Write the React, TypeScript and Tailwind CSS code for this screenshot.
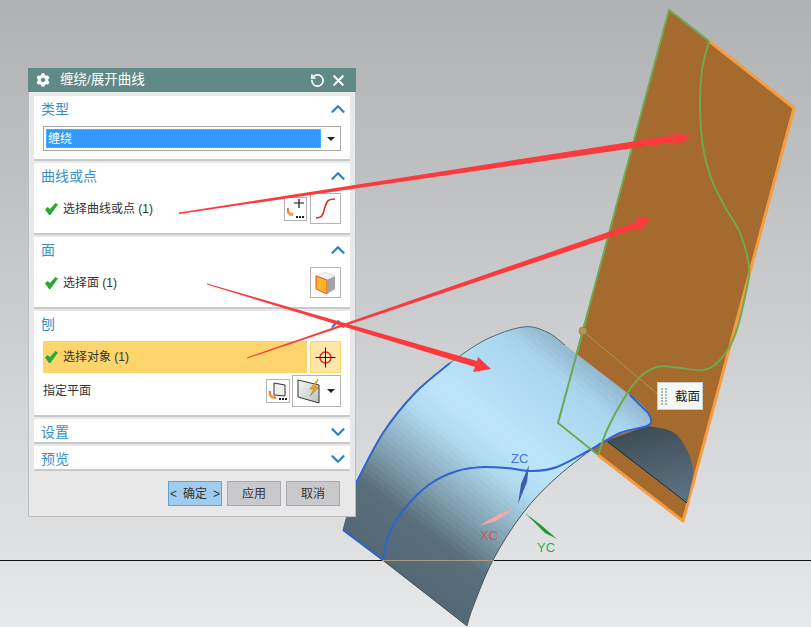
import type { ReactNode } from "react";
import { FaCog } from "react-icons/fa";
import { ChevronDown, ChevronUp, RotateCw, X } from "lucide-react";

type Pt = [number, number];

// catmull-rom through the points, good enough for the model's curves
function smooth(pts: Pt[], move = true) {
  let d = move ? `M${pts[0][0]},${pts[0][1]}` : "";
  for (let i = 0; i < pts.length - 1; i++) {
    const p0 = pts[Math.max(i - 1, 0)];
    const p1 = pts[i];
    const p2 = pts[i + 1];
    const p3 = pts[Math.min(i + 2, pts.length - 1)];
    const c1 = [p1[0] + (p2[0] - p0[0]) / 6, p1[1] + (p2[1] - p0[1]) / 6];
    const c2 = [p2[0] - (p3[0] - p1[0]) / 6, p2[1] - (p3[1] - p1[1]) / 6];
    d += ` C${c1[0]},${c1[1]} ${c2[0]},${c2[1]} ${p2[0]},${p2[1]}`;
  }
  return d;
}

const topArc: Pt[] = [[356, 483], [383, 433], [415, 393], [450, 363], [485, 340], [523, 327], [547, 332], [565, 345]];
const lowerArc: Pt[] = [[600, 443], [557, 477], [523, 513], [493, 560], [473, 607], [467, 626]];
const wrapCurve: Pt[] = [
  [383, 560], [389, 534], [405, 508], [430, 484], [457, 471], [483, 467], [507, 468],
  [533, 471], [557, 467], [590, 450], [620, 433], [647, 426], [651, 420], [648, 413],
  [640, 405], [630, 395],
];
const plateCurve: Pt[] = [
  [709, 41], [702, 70], [700, 105], [703, 147], [711, 178], [725, 207], [740, 233],
  [749, 267], [746, 292], [735, 335], [720, 360], [703, 370], [673, 367], [657, 367], [640, 377],
  [623, 400], [607, 430], [598, 455],
];

const surfacePath =
  `M343,530 L356,483` +
  smooth(topArc, false) +
  ` L630,395 Q648,408 651,418 Q651,424 647,426 Q620,432 600,443` +
  smooth(lowerArc, false) +
  ` Z`;

// the shading on the cylinder comes in visible facets, so hard stops
const ramp: [number, number[]][] = [
  [0, [82, 103, 115]],
  [0.22, [88, 110, 123]],
  [0.36, [136, 168, 184]],
  [0.5, [176, 218, 240]],
  [0.6, [189, 228, 250]],
  [0.85, [168, 213, 238]],
  [0.95, [143, 180, 201]],
  [1, [127, 160, 181]],
];
function rampAt(t: number) {
  let i = 0;
  while (i < ramp.length - 2 && t > ramp[i + 1][0]) i++;
  const [a, ca] = ramp[i];
  const [b, cb] = ramp[i + 1];
  const k = (t - a) / (b - a);
  return `rgb(${ca.map((v, j) => Math.round(v + (cb[j] - v) * k)).join(",")})`;
}
const BANDS = 60;
const bandStops = Array.from({ length: BANDS }, (_, i) => ({
  from: i / BANDS,
  to: (i + 1) / BANDS,
  color: rampAt((i + 0.5) / BANDS),
}));

function Scene() {
  return (
    <svg className="absolute inset-0" width={811} height={627} viewBox="0 0 811 627">
      <defs>
        <linearGradient id="shell" gradientUnits="userSpaceOnUse" x1={372} y1={580} x2={570} y2={324}>
          {bandStops.map((s) => [
            <stop key={`${s.from}a`} offset={s.from} stopColor={s.color} />,
            <stop key={`${s.from}b`} offset={s.to} stopColor={s.color} />,
          ])}
        </linearGradient>
        <linearGradient id="inner" x1="0.2" y1="0" x2="0.5" y2="1">
          <stop offset="0" stopColor="#3b4a52" />
          <stop offset="1" stopColor="#5b7180" />
        </linearGradient>
      </defs>

      <line x1={0} y1={560.5} x2={811} y2={560.5} stroke="#111" strokeWidth={1} />

      {/* sheet */}
      <polygon points="669,10 794,108 683,521 558,423" fill="#a46a2e" />
      <polyline points="709,41 794,108 683,521 598,455" fill="none" stroke="#f59c42" strokeWidth={3} strokeLinejoin="round" />
      <polyline points="709,41 669,10 558,423" fill="none" stroke="#6fa950" strokeWidth={2} />

      {/* cylinder */}
      <path d={`M606,441 L647,426 ${smooth([[647, 426], [673, 432], [687, 450], [693, 470], [690, 490], [687, 503]], false)} Z`} fill="url(#inner)" />
      <line x1={608} y1={442} x2={687} y2={503} stroke="#2a2a2a" strokeWidth={1} />
      <path d={surfacePath} fill="url(#shell)" />
      <path d={smooth(lowerArc)} fill="none" stroke="#4a5458" strokeWidth={1} />
      <path d={smooth(topArc.slice(3))} fill="none" stroke="#55656e" strokeWidth={1} />
      <path d={smooth(topArc.slice(0, 4))} fill="none" stroke="#2f64d0" strokeWidth={2} />
      <line x1={356} y1={483} x2={343} y2={530} stroke="#55656e" strokeWidth={1} />
      <line x1={343} y1={530} x2={383} y2={560} stroke="#2f64d0" strokeWidth={2} />
      <line x1={383} y1={560} x2={467} y2={626} stroke="#46565f" strokeWidth={1} />
      <path d={smooth(wrapCurve)} fill="none" stroke="#2f64d0" strokeWidth={2} />
      <line x1={382} y1={560.5} x2={494} y2={560.5} stroke="#b09a80" strokeWidth={1} />

      {/* green sketch on top of the shell */}
      <path d={smooth(plateCurve)} fill="none" stroke="#6fa950" strokeWidth={2} />
      <polyline points="586,320 558,423 598,455" fill="none" stroke="#6fa950" strokeWidth={2} />

      {/* label leader + handle */}
      <line x1={583} y1={331} x2={660} y2={396} stroke="#a59a50" strokeWidth={1} />
      <circle cx={583} cy={331} r={4} fill="#b5944e" stroke="#7a6a3a" strokeWidth={0.5} />

      {/* wcs */}
      <polygon points="529,465 527,482 518,504 521,484" fill="#3f5ca8" />
      <polygon points="514,509 499,514 479,526 496,521" fill="#f5a9a9" />
      <polygon points="525,513 541,525 557,539 545,533" fill="#1f9a2e" />
      <text x={511} y={463} fontSize={13} fill="#3a78e0" fontFamily="Liberation Sans, sans-serif">ZC</text>
      <text x={480} y={540} fontSize={13} fill="#d9534f" fontFamily="Liberation Sans, sans-serif">XC</text>
      <text x={537} y={552} fontSize={13} fill="#35a84a" fontFamily="Liberation Sans, sans-serif">YC</text>
    </svg>
  );
}

function Arrows() {
  return (
    <svg className="pointer-events-none absolute inset-0" width={811} height={627} viewBox="0 0 811 627">
      <g fill="#fc3a3c">
        <polygon points="179,212.5 675,135 673,132 691,137 675,146 676,142 179,214" />
        <polygon points="247,357.5 637,222 635,217 651,219 639,232 638,228 247,358.5" />
        <polygon points="207,283.5 477,361 478,357 491,369 473,372 475,367 207,284.5" />
      </g>
    </svg>
  );
}

function Check() {
  return (
    <svg width={13} height={12} viewBox="0 0 13 12" className="shrink-0">
      <path d="M0,6.5 L2.6,4 L5,6 L10.4,0 L13,1.6 L5.4,12 L4,12 Z" fill="#2aa838" />
    </svg>
  );
}

function Section({ title, open = true, children, className = "" }: { title: string; open?: boolean; children?: ReactNode; className?: string }) {
  return (
    <section className={`border-b-2 border-[#c9c9c9] bg-white ${className}`}>
      <div className="flex h-[25px] items-center justify-between pl-[7px] pr-px text-[14px] text-[#3a8fc7]">
        <span className="pt-px">{title}</span>
        {open ? (
          <ChevronUp size={22} strokeWidth={2.6} className="text-[#2e86c1]" />
        ) : (
          <ChevronDown size={22} strokeWidth={2.6} className="text-[#2e86c1]" />
        )}
      </div>
      {children}
    </section>
  );
}

function IconBox({ className = "", children }: { className?: string; children: ReactNode }) {
  return (
    <div className={`flex items-center justify-center border border-[#b4b4b4] bg-white ${className}`}>{children}</div>
  );
}

function AddIcon() {
  return (
    <svg width={21} height={22} viewBox="0 0 21 22">
      <path d="M9,5 H19 M14,1 V10" stroke="#111" strokeWidth={1.2} fill="none" />
      <path d="M3,10 Q2,16 8,17" stroke="#e8781e" strokeWidth={2} fill="none" />
      <path d="M1,14 L5,18 L9,15" fill="#f2a341" />
      <path d="M11,18 h2 v2 h-2 z M14,18 h2 v2 h-2 z M17,18 h2 v2 h-2 z" fill="#222" />
    </svg>
  );
}

function PlaneAddIcon() {
  return (
    <svg width={22} height={22} viewBox="0 0 22 22">
      <path d="M7,3 L18,5 V16 L7,15 Z" fill="#eef1ee" stroke="#333" strokeWidth={1} />
      <path d="M3,11 Q2,17 9,18" stroke="#e8781e" strokeWidth={2} fill="none" />
      <path d="M1,15 L5,19 L9,16" fill="#f2a341" />
      <path d="M12,18 h2 v2 h-2 z M15,18 h2 v2 h-2 z M18,18 h2 v2 h-2 z" fill="#222" />
    </svg>
  );
}

function SCurveIcon() {
  return (
    <svg width={25} height={25} viewBox="0 0 25 25">
      <path d="M3,22 C10,22 10,18 12,11 C14,4 16,3 22,3" fill="none" stroke="#c8342a" strokeWidth={1.6} />
    </svg>
  );
}

function CubeIcon() {
  return (
    <svg width={23} height={24} viewBox="0 0 23 24">
      <polygon points="11,1 21,5 13,9 2,5" fill="#f1f1f1" stroke="#c9c9c9" strokeWidth={0.5} />
      <polygon points="2,5 13,9 13,23 2,18" fill="#f8b62b" stroke="#e2552a" strokeWidth={1} />
      <polygon points="13,9 21,5 21,18 13,23" fill="#a4a4a6" />
    </svg>
  );
}

function TargetIcon() {
  return (
    <svg width={21} height={21} viewBox="0 0 21 21">
      <circle cx={10.5} cy={10.5} r={5.5} fill="none" stroke="#e0262a" strokeWidth={1.4} />
      <path d="M10.5,0.5 V20.5 M0.5,10.5 H20.5" stroke="#111" strokeWidth={1} />
    </svg>
  );
}

function PlaneIcon() {
  return (
    <svg width={24} height={26} viewBox="0 0 24 26">
      <polygon points="1,2 22,7 22,25 1,19" fill="url(#planeFill)" stroke="#333" strokeWidth={1} />
      <defs>
        <linearGradient id="planeFill" x1="0" y1="0" x2="1" y2="1">
          <stop offset="0" stopColor="#f4f7f3" />
          <stop offset="1" stopColor="#b9c4bb" />
        </linearGradient>
      </defs>
      <path d="M21,1 L13,11 H17 L13,18 L22,9 H18 Z" fill="#efa52b" stroke="#9b6a1a" strokeWidth={0.5} />
    </svg>
  );
}

function Caret({ className = "" }: { className?: string }) {
  return <span className={`h-0 w-0 border-x-[4px] border-t-[4px] border-x-transparent border-t-[#222] ${className}`} />;
}

function Dialog() {
  return (
    <div className="relative flex h-[449px] w-[328px] flex-col border border-[#bdbdbd] bg-[#e8e8e8] text-[12px] text-[#333] [font-family:'Liberation_Sans','Noto_Sans_CJK_SC',sans-serif]">
      <header className="-mx-px -mt-px flex h-[24px] shrink-0 items-center bg-[#5f8a85] pl-[8px] pr-[9px] text-[13.5px] text-white">
        <FaCog size={14} />
        <span className="ml-[10px] flex-1">缠绕/展开曲线</span>
        <RotateCw size={15} strokeWidth={2.6} className="-scale-x-100" />
        <X size={17} strokeWidth={3} className="ml-[5px]" />
      </header>

      <div className="flex flex-col gap-[2px] px-[5px] pt-[4px]">
        <Section title="类型" className="h-[65px]">
          <div className="mx-[9px] mt-[5px] flex h-[25px] items-center border border-[#a8a8a8] bg-white p-[2px]">
            <div className="flex h-[19px] w-[275px] items-center border border-dotted border-[#f09a3e] bg-[#3399ff] pl-[1px] pt-px text-white">缠绕</div>
            <Caret className="ml-[6px]" />
          </div>
        </Section>

        <Section title="曲线或点" className="h-[72px]">
          <div className="mt-[5px] flex items-center pl-[11px] pr-[9px]">
            <Check />
            <span className="ml-[5px] flex-1">选择曲线或点 (1)</span>
            <IconBox className="h-[24px] w-[23px]"><AddIcon /></IconBox>
            <IconBox className="ml-[3px] h-[31px] w-[31px]"><SCurveIcon /></IconBox>
          </div>
        </Section>

        <Section title="面" className="h-[72px]">
          <div className="mt-[5px] flex items-center pl-[11px] pr-[9px]">
            <Check />
            <span className="ml-[5px] flex-1">选择面 (1)</span>
            <IconBox className="h-[31px] w-[31px]"><CubeIcon /></IconBox>
          </div>
        </Section>

        <Section title="刨" className="h-[106px]">
          <div className="mx-[9px] mt-[5px] flex h-[32px] gap-[3px]">
            <div className="flex flex-1 items-center gap-[5px] bg-[#fdd56c] pl-[2px]">
              <Check />
              <span>选择对象 (1)</span>
            </div>
            <div className="flex w-[31px] items-center justify-center border border-[#fdd56c] bg-[#fce6a8]"><TargetIcon /></div>
          </div>
          <div className="mx-[9px] mt-[2px] flex items-center">
            <span className="flex-1">指定平面</span>
            <IconBox className="h-[24px] w-[24px]"><PlaneAddIcon /></IconBox>
            <IconBox className="ml-[2px] h-[32px] w-[49px] !justify-start pl-[4px]"><PlaneIcon /><Caret className="ml-[6px]" /></IconBox>
          </div>
        </Section>

        <Section title="设置" open={false} className="h-[25px]" />
        <Section title="预览" open={false} className="h-[25px]" />
      </div>

      <div className="mt-[10px] flex justify-end gap-[5px] pr-[15px]">
        <button className="flex h-[25px] w-[54px] items-center justify-center gap-[6px] border border-[#5aa5d8] bg-[#a0cdee]"><span>&lt;</span>确定<span>&gt;</span></button>
        <button className="h-[25px] w-[54px] border border-[#a9a9ac] bg-[#c9c9cd]">应用</button>
        <button className="h-[25px] w-[54px] border border-[#a9a9ac] bg-[#c9c9cd]">取消</button>
      </div>
    </div>
  );
}

function SectionLabel() {
  return (
    <div className="absolute left-[657px] top-[382px] flex h-[28px] w-[46px] items-center border border-[#c9cdd0] bg-[#f4f8f9] pl-[3px] text-[12.5px] text-[#222] [font-family:'Noto_Sans_CJK_SC',sans-serif]">
      <div className="grid w-[7px] grid-cols-2 gap-[1px]">
        {Array.from({ length: 12 }).map((_, i) => (
          <span key={i} className="h-[2px] w-[2px] bg-[#aeb4b8]" />
        ))}
      </div>
      <span className="ml-[7px]">截面</span>
    </div>
  );
}

export default function App() {
  return (
    <div className="relative h-[627px] w-[811px] overflow-hidden bg-gradient-to-b from-[#b0b1b3] to-[#e7e8e9] pl-[28px] pt-[68px]">
      <Scene />
      <SectionLabel />
      <Dialog />
      <Arrows />
    </div>
  );
}
